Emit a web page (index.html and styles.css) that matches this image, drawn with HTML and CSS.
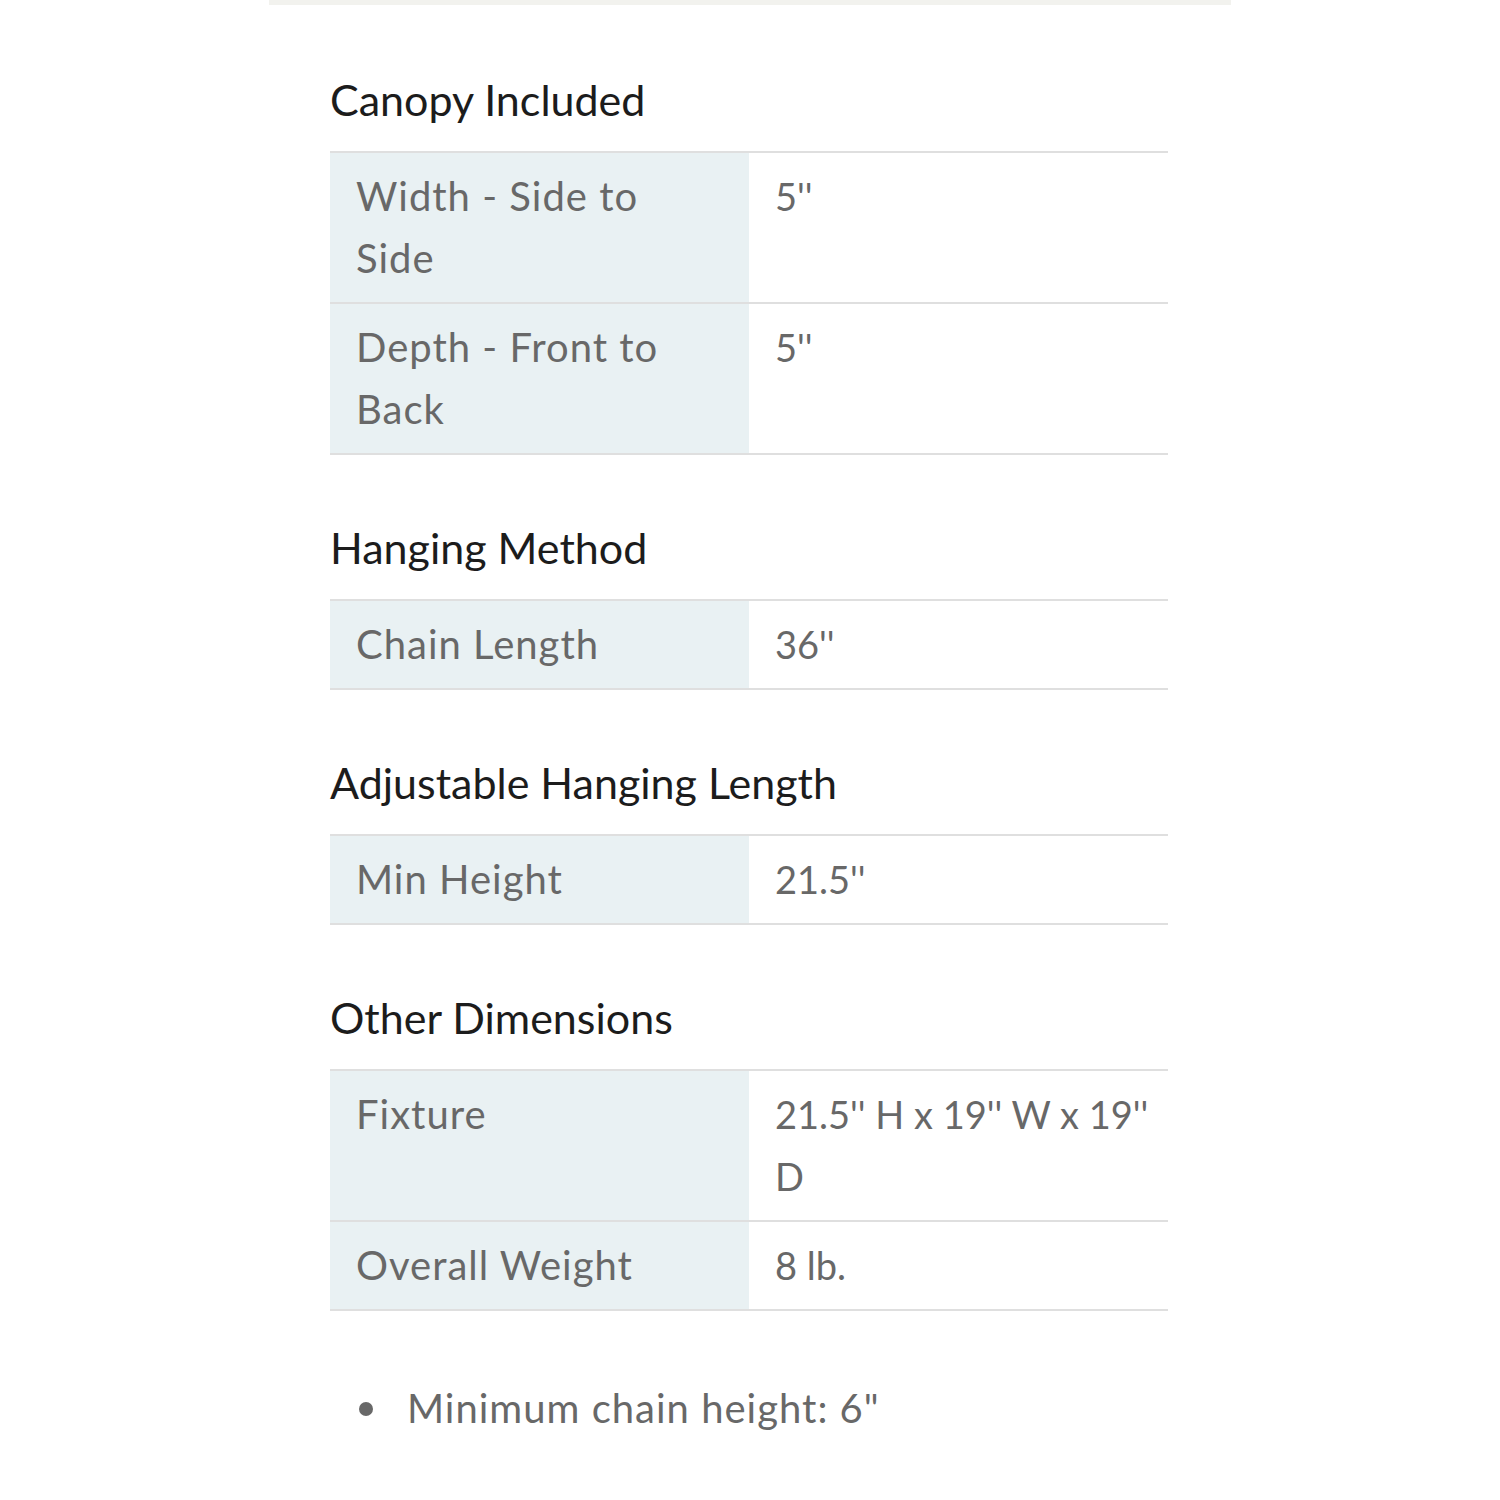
FILE: index.html
```html
<!DOCTYPE html>
<html>
<head>
  <link rel="stylesheet" href="styles.css">
</head>
<body>
  <div class="page">
    <div class="top-bar"></div>
    <div class="specs">

      <h3 class="spec-title">Canopy Included</h3>
      <table class="spec-table">
        <tr>
          <td class="spec-label">Width - Side to Side</td>
          <td class="spec-value">5''</td>
        </tr>
        <tr>
          <td class="spec-label">Depth - Front to Back</td>
          <td class="spec-value">5''</td>
        </tr>
      </table>

      <h3 class="spec-title">Hanging Method</h3>
      <table class="spec-table">
        <tr>
          <td class="spec-label">Chain Length</td>
          <td class="spec-value">36''</td>
        </tr>
      </table>

      <h3 class="spec-title">Adjustable Hanging Length</h3>
      <table class="spec-table">
        <tr>
          <td class="spec-label">Min Height</td>
          <td class="spec-value">21.5''</td>
        </tr>
      </table>

      <h3 class="spec-title">Other Dimensions</h3>
      <table class="spec-table">
        <tr>
          <td class="spec-label">Fixture</td>
          <td class="spec-value">21.5'' H x 19'' W x 19'' D</td>
        </tr>
        <tr>
          <td class="spec-label">Overall Weight</td>
          <td class="spec-value">8 lb.</td>
        </tr>
      </table>

      <ul class="spec-notes">
        <li>Minimum chain height: 6"</li>
      </ul>

    </div>
  </div>
</body>
</html>
```

FILE: styles.css
```css
body {
  margin: 0;
  background-color: #ffffff;
  font-family: Lato, "Open Sans", sans-serif;
}
.page {
  width: 962px;
  margin: 0 auto;
}
.top-bar {
  /* sisa panel abu-abu di atas */
  height: 5px;
  background-color: #f2f2ee;
}
.specs {
  padding: 0 63px 80px 61px;
}
.spec-title {
  margin: 65px 0 23px;
  font-size: 43px;
  line-height: 56px;
  font-weight: 400;
  color: #1c1c1c;
}
.spec-title:first-child {
  margin-top: 67px;
}
.spec-table {
  width: 100%;
  table-layout: fixed;
  border-collapse: collapse;
  border-top: 2px solid #dfdfdf;
}
.spec-table td {
  box-sizing: border-box;
  width: 50%;
  padding: 12px 27px 13px 26px;
  vertical-align: top;
  line-height: 62px;
  color: #686868;
  border-bottom: 2px solid #dfdfdf;
}
.spec-label {
  font-size: 40px;
  letter-spacing: 1px;
  background-color: #e9f1f3;
}
.spec-table .spec-value {
  padding-right: 12px;
  font-size: 38px;
}
.spec-notes {
  list-style: none;
  margin: 67px 0 0;
  padding: 0 0 0 29px;
}
.spec-notes li {
  display: flex;
  align-items: center;
  gap: 34px;
  font-size: 40px;
  letter-spacing: 1px;
  line-height: 61px;
  color: #686868;
}
.spec-notes li::before {
  content: "";
  flex-shrink: 0;
  width: 14px;
  height: 14px;
  border-radius: 50%;
  background-color: #686868;
}
```
